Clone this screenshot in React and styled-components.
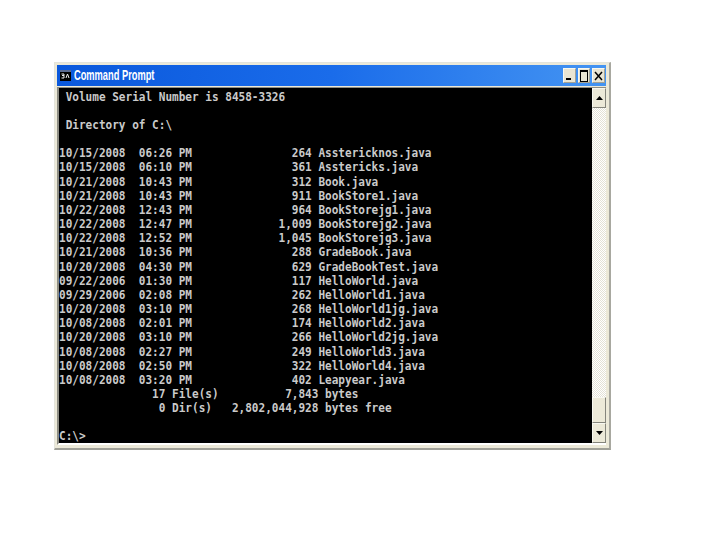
import React from "react";
import styled, { createGlobalStyle } from "styled-components";

const Global = createGlobalStyle`
  html, body { margin: 0; padding: 0; background: #fff; width: 720px; height: 540px; overflow: hidden; }
`;
const Page = styled.div`
  width: 720px; height: 540px; padding: 62px 0 0 54px; box-sizing: border-box; background: #fff;
`;
const Win = styled.div`
  width: 557px; height: 388px; box-sizing: border-box; display: flex; flex-direction: column;
  background: #ece9d8; border: 1px solid #e4e4dc; border-right: 2px solid #a8a8a0; border-bottom: 2px solid #a0a098;
  padding: 2px 3px 3px 2px;
`;
const TitleBar = styled.div`
  height: 21px; flex: none; display: flex; align-items: center; padding: 0 1px 0 3px;
  background: linear-gradient(to right, #0a58dc 0%, #1a6cea 50%, #4494f2 100%);
`;
const AppIcon = styled.svg`
  width: 11px; height: 11px; flex: none; margin-right: 3px;
`;
const Title = styled.div`
  flex: 1; color: #fff; font: bold 14.5px/21px "Liberation Sans", sans-serif;
  transform-origin: left center; transform: scaleX(.64); white-space: nowrap;
`;
const WinBtn = styled.div`
  width: ${(p) => p.$w}px; height: 15px; margin-left: 2px; flex: none; box-sizing: border-box;
  background: #e9e5d3; border: 1px solid #f8f8f0; border-right-color: #a2a296; border-bottom-color: #a2a296;
  display: flex; align-items: center; justify-content: center; color: #000;
`;
const Body = styled.div`
  flex: 1; display: flex; min-height: 0; margin-top: 1px; border-left: 2px solid #8d8d84; border-top: 1px solid #8d8d84; border-bottom: 2px solid #fff;
`;
const Console = styled.div`
  flex: 1; background: #000; overflow: hidden; padding: 2px 0 0 0;
`;
const Screen = styled.pre`
  margin: 0; color: #cacaca; transform-origin: left top; transform: scaleY(1.18);
  font: bold 11.05px/12px "DejaVu Sans Mono", "Liberation Mono", monospace;
`;
const Scroll = styled.div`
  width: 14px; flex: none; display: flex; flex-direction: column;
  background-color: #f4f3ec;
  background-image: repeating-conic-gradient(#fff 0 25%, #e4e2d6 0 50%);
  background-size: 2px 2px;
`;
const ScrollBtn = styled.div`
  height: 20px; flex: none; box-sizing: border-box; background: #ece9d8;
  border: 1px solid #f8f8f0; border-right-color: #85857c; border-bottom-color: #85857c;
  display: flex; align-items: center; justify-content: center;
`;
const Track = styled.div`
  flex: 1;
`;
const Thumb = styled.div`
  height: 26px; flex: none; box-sizing: border-box; background: #ece9d8;
  border: 1px solid #f8f8f0; border-right-color: #85857c; border-bottom-color: #85857c;
`;

const text = ` Volume Serial Number is 8458-3326

 Directory of C:\\

10/15/2008  06:26 PM               264 Asstericknos.java
10/15/2008  06:10 PM               361 Asstericks.java
10/21/2008  10:43 PM               312 Book.java
10/21/2008  10:43 PM               911 BookStore1.java
10/22/2008  12:43 PM               964 BookStorejg1.java
10/22/2008  12:47 PM             1,009 BookStorejg2.java
10/22/2008  12:52 PM             1,045 BookStorejg3.java
10/21/2008  10:36 PM               288 GradeBook.java
10/20/2008  04:30 PM               629 GradeBookTest.java
09/22/2006  01:30 PM               117 HelloWorld.java
09/29/2006  02:08 PM               262 HelloWorld1.java
10/20/2008  03:10 PM               268 HelloWorld1jg.java
10/08/2008  02:01 PM               174 HelloWorld2.java
10/20/2008  03:10 PM               266 HelloWorld2jg.java
10/08/2008  02:27 PM               249 HelloWorld3.java
10/08/2008  02:50 PM               322 HelloWorld4.java
10/08/2008  03:20 PM               402 Leapyear.java
              17 File(s)          7,843 bytes
               0 Dir(s)   2,802,044,928 bytes free

C:\\>`;

const Tri = ({ down }) => (
  <svg width="7" height="4" viewBox="0 0 7 4">
    <path d={down ? "M0 0H7L3.5 4Z" : "M0 4H7L3.5 0Z"} fill="#000" />
  </svg>
);

export default function App() {
  return (
    <Page>
      <Global />
      <Win>
        <TitleBar>
          <AppIcon viewBox="0 0 11 11">
            <rect width="11" height="11" fill="#000" />
            <rect width="11" height="2" fill="#5a6a90" />
            <path d="M1.5 4h2.5v1.5h-2M4 5.5v2.5h-2.5M6 8l1.5-4L9 8" stroke="#eee" strokeWidth="1" fill="none" />
          </AppIcon>
          <Title>Command Prompt</Title>
          <WinBtn $w={13}>
            <svg width="9" height="9" viewBox="0 0 9 9"><rect x="1" y="7" width="5" height="2" fill="#000" /></svg>
          </WinBtn>
          <WinBtn $w={12}>
            <svg width="8" height="12" viewBox="0 0 8 12"><path d="M0 0H8V12H0Z M1 2V11H7V2Z" fillRule="evenodd" fill="#000" /></svg>
          </WinBtn>
          <WinBtn $w={13}>
            <svg width="9" height="10" viewBox="0 0 9 10"><path d="M1 1L8 9M8 1L1 9" stroke="#000" strokeWidth="1.5" /></svg>
          </WinBtn>
        </TitleBar>
        <Body>
          <Console><Screen>{text}</Screen></Console>
          <Scroll>
            <ScrollBtn><Tri /></ScrollBtn>
            <Track />
            <Thumb />
            <ScrollBtn><Tri down /></ScrollBtn>
          </Scroll>
        </Body>
      </Win>
    </Page>
  );
}
